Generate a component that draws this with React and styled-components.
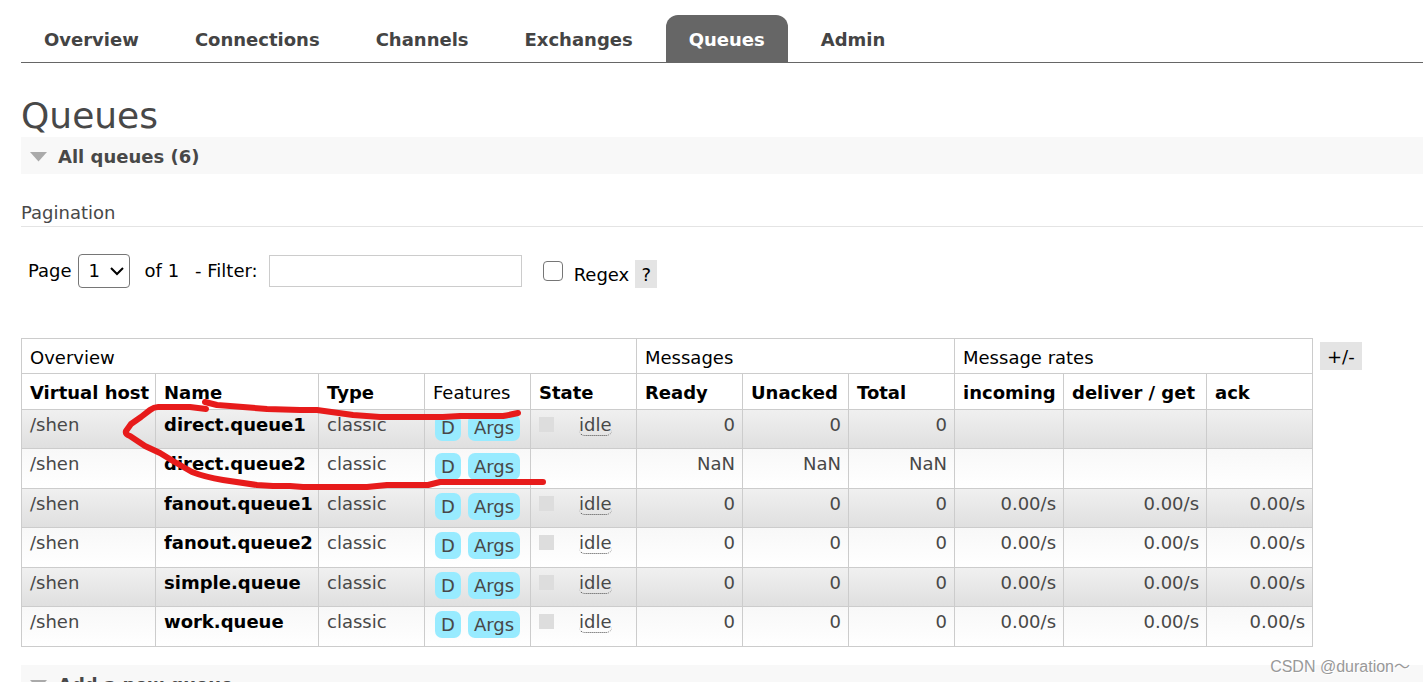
import React from "react";
import styled, { createGlobalStyle } from "styled-components";

const GlobalStyle = createGlobalStyle`
  *, *::before, *::after { box-sizing: border-box; }
  html { overflow: hidden; }
  body {
    margin: 0;
    height: 100vh;
    overflow: hidden;
    background: #fff;
    color: #484848;
    font-family: Verdana, "DejaVu Sans", sans-serif;
    font-size: 18px;
    line-height: 22px;
  }
`;

const Page = styled.div`
  position: relative;
  height: 100vh;
  overflow: hidden;
  padding: 15px 0 0 21px;
`;

const Tabs = styled.nav`
  display: flex;
  gap: 10px;
  border-bottom: 1px solid #666;
`;

const Tab = styled.a`
  padding: 14px 23px 11px;
  border-radius: 12px 12px 0 0;
  background: ${(p) => (p.$active ? "#666" : "transparent")};
  color: ${(p) => (p.$active ? "#fff" : "#444")};
  font-weight: bold;
  text-decoration: none;
`;

const Title = styled.h1`
  margin: 31px 0 0;
  font-size: 36px;
  font-weight: normal;
  line-height: 43px;
`;

const SectionHeader = styled.h2`
  display: flex;
  align-items: center;
  gap: 11px;
  margin: 0;
  padding: 2px 9px 0;
  height: 37px;
  background: #f8f8f8;
  font-size: 18px;
  font-weight: bold;
`;

const Subheading = styled.h3`
  margin: 28px 0 27px;
  padding-bottom: 2px;
  border-bottom: 1px solid #e4e4e4;
  font-size: 18px;
  font-weight: normal;
`;

const Filters = styled.form`
  display: flex;
  align-items: center;
  height: 34px;
  margin: 0 0 50px 7px;
  color: #000;
`;

const PageLabel = styled.label`
  display: flex;
  align-items: center;
  gap: 6px;
`;

const SelectBox = styled.span`
  position: relative;
  display: flex;
  svg {
    position: absolute;
    right: 6px;
    top: 11px;
    pointer-events: none;
  }
`;

const Select = styled.select`
  appearance: none;
  width: 52px;
  height: 34px;
  padding: 0 0 0 10px;
  border: 1px solid #767676;
  border-radius: 4px;
  background: #fff;
  color: #000;
  font: inherit;
`;

const PageCount = styled.span`
  margin: 0 16px 0 15px;
`;

const FilterLabel = styled.label`
  display: flex;
  align-items: center;
  gap: 11px;
`;

const FilterInput = styled.input`
  width: 253px;
  height: 32px;
  padding: 4px;
  border: 1px solid #ccc;
  font: inherit;
`;

const RegexLabel = styled.label`
  display: flex;
  align-items: center;
  gap: 11px;
  margin: 0 6px 0 21px;
  span { padding-top: 8px; }
`;

const Checkbox = styled.input`
  appearance: none;
  width: 20px;
  height: 20px;
  margin: 0;
  border: 1px solid #767676;
  border-radius: 4px;
  background: #fff;
`;

const GreyButton = styled.button`
  height: 28px;
  padding: 1px 7px 0;
  border: 0;
  background: #e4e4e4;
  color: #000;
  font: inherit;
`;

const HelpButton = styled(GreyButton)`
  width: 22px;
  padding: 1px 0 0;
  align-self: flex-end;
`;

const TableArea = styled.div`
  position: relative;
  display: flex;
  align-items: flex-start;
  gap: 7px;
  ${GreyButton} { margin-top: 4px; }
`;

const Table = styled.table`
  flex: none;
  width: 1292px;
  table-layout: fixed;
  border-collapse: collapse;
`;

const HeaderCell = styled.th`
  height: ${(p) => (p.$group ? 35 : 36)}px;
  padding: 3px 0 0 8px;
  border: 1px solid #ccc;
  color: #000;
  font-weight: ${(p) => (p.$plain ? "normal" : "bold")};
  text-align: left;
  white-space: nowrap;
`;

const Row = styled.tr`
  height: 39px;
  background: linear-gradient(#f0f0f0, #dfdfdf);
  &:nth-child(even) {
    height: 40px;
    background: linear-gradient(#f8f8f8, #fff);
  }
`;

const Cell = styled.td`
  padding: 4px 7px 0 8px;
  border: 1px solid #ccc;
  text-align: ${(p) => (p.$num ? "right" : "left")};
  vertical-align: top;
  white-space: nowrap;
`;

const QueueLink = styled.a`
  color: #000;
  font-weight: bold;
  text-decoration: none;
`;

const Badges = styled.div`
  display: flex;
  gap: 7px;
  padding-left: 2px;
`;

const Badge = styled.span`
  padding: 3px 6px 2px;
  border-radius: 7px;
  background: #98ebff;
`;

const State = styled.div`
  display: flex;
  align-items: flex-start;
  gap: 25px;
  &::before {
    content: "";
    width: 15px;
    height: 15px;
    margin-top: 3px;
    background: #ddd;
  }
`;

const StateName = styled.abbr`
  border-bottom: 1px dotted #484848;
  border-radius: 6px;
  line-height: 21px;
  text-decoration: none;
`;

const Marker = styled.svg`
  position: absolute;
  left: 0;
  top: 0;
  pointer-events: none;
`;

const NextSection = styled.div`
  margin-top: 18px;
`;

const Watermark = styled.div`
  position: absolute;
  right: 13px;
  bottom: 4px;
  color: #999;
  font: 16px/22px "Liberation Sans", "Noto Sans CJK SC", sans-serif;
  text-shadow: 1px 1px 0 #fff;
`;

const tabs = ["Overview", "Connections", "Channels", "Exchanges", "Queues", "Admin"];
const widths = [134, 163, 106, 106, 106, 106, 106, 106, 109, 143, 106];
const columns = [
  "Virtual host", "Name", "Type", "Features", "State", "Ready",
  "Unacked", "Total", "incoming", "deliver / get", "ack",
];
const queues = [
  { name: "direct.queue1", state: "idle", count: "0", rate: "" },
  { name: "direct.queue2", state: "", count: "NaN", rate: "" },
  { name: "fanout.queue1", state: "idle", count: "0", rate: "0.00/s" },
  { name: "fanout.queue2", state: "idle", count: "0", rate: "0.00/s" },
  { name: "simple.queue", state: "idle", count: "0", rate: "0.00/s" },
  { name: "work.queue", state: "idle", count: "0", rate: "0.00/s" },
];

const Triangle = () => (
  <svg width="17" height="10" viewBox="0 0 17 10" aria-hidden="true">
    <path d="M0 0H17L8.5 9.5Z" fill="#aaa" />
  </svg>
);

export default function App() {
  return (
    <>
      <GlobalStyle />
      <Page>
        <Tabs>
          {tabs.map((t) => (
            <Tab key={t} href="#" $active={t === "Queues"}>{t}</Tab>
          ))}
        </Tabs>
        <Title>Queues</Title>
        <SectionHeader><Triangle />All queues (6)</SectionHeader>
        <Subheading>Pagination</Subheading>
        <Filters>
          <PageLabel>
            Page
            <SelectBox>
              <Select defaultValue="1"><option>1</option></Select>
              <svg width="14" height="12" viewBox="0 0 14 12" fill="none" stroke="#000" strokeWidth="2">
                <path d="M1 3L7 9L13 3" />
              </svg>
            </SelectBox>
          </PageLabel>
          <PageCount>of 1</PageCount>
          <FilterLabel>- Filter: <FilterInput type="text" /></FilterLabel>
          <RegexLabel><Checkbox type="checkbox" /><span>Regex</span></RegexLabel>
          <HelpButton type="button">?</HelpButton>
        </Filters>
        <TableArea>
          <Table>
            <colgroup>
              {widths.map((w, i) => <col key={i} width={w} />)}
            </colgroup>
            <thead>
              <tr>
                <HeaderCell $group $plain colSpan={5}>Overview</HeaderCell>
                <HeaderCell $group $plain colSpan={3}>Messages</HeaderCell>
                <HeaderCell $group $plain colSpan={3}>Message rates</HeaderCell>
              </tr>
              <tr>
                {columns.map((c) => (
                  <HeaderCell key={c} $plain={c === "Features"}>{c}</HeaderCell>
                ))}
              </tr>
            </thead>
            <tbody>
              {queues.map((q) => (
                <Row key={q.name}>
                  <Cell>/shen</Cell>
                  <Cell><QueueLink href="#">{q.name}</QueueLink></Cell>
                  <Cell>classic</Cell>
                  <Cell><Badges><Badge>D</Badge><Badge>Args</Badge></Badges></Cell>
                  <Cell>{q.state && <State><StateName>{q.state}</StateName></State>}</Cell>
                  <Cell $num>{q.count}</Cell>
                  <Cell $num>{q.count}</Cell>
                  <Cell $num>{q.count}</Cell>
                  <Cell $num>{q.rate}</Cell>
                  <Cell $num>{q.rate}</Cell>
                  <Cell $num>{q.rate}</Cell>
                </Row>
              ))}
            </tbody>
          </Table>
          <GreyButton type="button">+/-</GreyButton>
          <Marker
            width="540" height="160" viewBox="21 338 540 160" fill="none"
            stroke="#e71b1b" strokeWidth="6" strokeLinecap="round" strokeLinejoin="round"
          >
            <path d="M206 409L190 407L158 407Q154 407 150 410L141 417L131 424L126 431Q125 434 130 436L145 446L160 453L173 461L192 472Q205 477 223 480L257 485L273 486H290L303 487H367L387 485H428L440 482H543" />
            <path d="M205 402L217 405L243 407L267 409L300 410L317 410L353 415L380 417H443L460 416L503 416Q509 415 518 413" />
          </Marker>
        </TableArea>
        <NextSection>
          <SectionHeader><Triangle />Add a new queue</SectionHeader>
        </NextSection>
        <Watermark>CSDN @duration～</Watermark>
      </Page>
    </>
  );
}
